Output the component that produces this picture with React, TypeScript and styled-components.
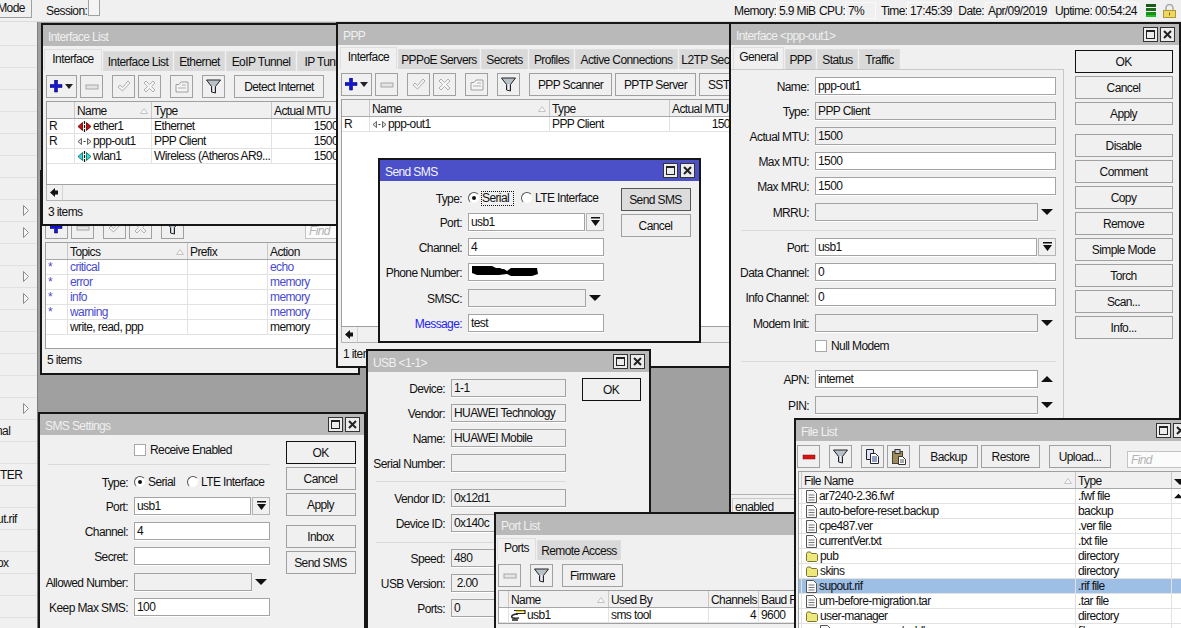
import React from "react"
import styled, { createGlobalStyle } from "styled-components"

const GlobalStyle = createGlobalStyle`
  * { box-sizing: border-box; }
  html, body { margin: 0; padding: 0; background: #a0a0a0; }
  body {
    font-family: "Liberation Sans", Arial, sans-serif;
    font-size: 12px;
    letter-spacing: -0.6px;
    color: #111;
  }
`

/* ---------- page frame ---------- */

const Desktop = styled.div`
  position: relative;
  width: 1181px;
  height: 628px;
  overflow: hidden;
  display: flex;
  flex-direction: column;
`

const TopBar = styled.header`
  flex: none;
  height: 22px;
  display: flex;
  align-items: center;
  padding-right: 4px;
  background: #f0f0f0;
  border-bottom: 1px solid #dcdcdc;
`

const ModeButton = styled.div`
  align-self: flex-start;
  width: 67px;
  height: 18px;
  margin-left: -35px;
  line-height: 16px;
  text-align: center;
  border: 1px solid #a0a0a0;
  border-top: none;
`

const SessionLabel = styled.span`
  margin-left: 14px;
  width: 42px;
`

const SessionBox = styled.div`
  align-self: flex-start;
  width: 12px;
  height: 16px;
  background: #f4f4f4;
  border: 1px solid #a0a0a0;
  border-top: none;
`

const StatusItems = styled.div`
  margin-left: auto;
  display: flex;
  align-items: center;
  gap: 5px;
`

const StatusItem = styled.div`
  display: flex;
  align-items: center;
`

const StatusLabel = styled.span<{ $w: number }>`
  width: ${(p) => p.$w}px;
  text-align: right;
  white-space: nowrap;
`

const StatusValue = styled.span<{ $w: number }>`
  width: ${(p) => p.$w}px;
  height: 17px;
  line-height: 16px;
  padding-left: 2px;
  margin-left: 1px;
  border: 1px solid #fafafa;
  white-space: nowrap;
`

const TrayIcons = styled.div`
  display: flex;
  align-items: center;
  gap: 6px;
  margin-left: 7px;
`

const Main = styled.div`
  flex: 1;
  display: flex;
  min-height: 0;
`

const Sidebar = styled.nav`
  flex: none;
  width: 38px;
  padding-top: 2px;
  background: #f0f0f0;
  border-right: 1px solid #808080;
  overflow: hidden;
`

const SidebarRow = styled.div`
  height: 22px;
  display: flex;
  align-items: center;
  justify-content: space-between;
  padding-right: 8px;
  border-bottom: 1px solid #e0e0e0;
`

const SidebarText = styled.span<{ $clip: number }>`
  margin-left: -${(p) => p.$clip}px;
  white-space: nowrap;
`

const Workspace = styled.main`
  flex: 1;
  background: #a0a0a0;
`

/* ---------- window chrome ---------- */

const WindowFrame = styled.section<{ $x: number; $y: number; $w: number; $h: number }>`
  position: absolute;
  left: ${(p) => p.$x}px;
  top: ${(p) => p.$y}px;
  width: ${(p) => p.$w}px;
  height: ${(p) => p.$h}px;
  display: flex;
  flex-direction: column;
  overflow: hidden;
  background: #f0f0f0;
  border: 2px solid #161616;
`

const TitleBar = styled.div<{ $active?: boolean }>`
  flex: none;
  height: 21px;
  display: flex;
  align-items: center;
  justify-content: space-between;
  padding: 0 4px 0 5px;
  background: ${(p) => (p.$active ? "#4c50c8" : "#b9b9b9")};
  color: ${(p) => (p.$active ? "#f4f4ff" : "#f0f0f0")};
`

const TitleText = styled.span`
  padding-top: 2px;
`

const TitleButtons = styled.div`
  display: flex;
  gap: 2px;
`

const TitleButton = styled.div`
  width: 15px;
  height: 15px;
  display: flex;
  align-items: center;
  justify-content: center;
  background: #ececec;
  border: 1px solid #333;
`

const MaxGlyph = styled.span`
  display: block;
  width: 9px;
  height: 9px;
  border: 1px solid #222;
  border-top-width: 2px;
`

const BodyRow = styled.div`
  flex: 1;
  display: flex;
  min-height: 0;
`

const TabBar = styled.div<{ $mt: number; $ml: number }>`
  flex: none;
  height: 22px;
  display: flex;
  align-items: flex-end;
  gap: 1px;
  margin: ${(p) => p.$mt}px 0 0 ${(p) => p.$ml}px;
`

const Tab = styled.div<{ $w: number; $active?: boolean }>`
  flex: none;
  width: ${(p) => p.$w}px;
  height: ${(p) => (p.$active ? 22 : 20)}px;
  line-height: ${(p) => (p.$active ? 19 : 20)}px;
  text-align: center;
  white-space: nowrap;
  background: ${(p) => (p.$active ? "#f0f0f0" : "#d9d9d9")};
  border: 1px solid #dedede;
  border-bottom: none;
`

const Toolbar = styled.div<{ $inset: number; $mt?: number }>`
  flex: none;
  height: 23px;
  display: flex;
  gap: 9px;
  margin: ${(p) => p.$mt ?? 4}px ${(p) => p.$inset}px 3px;
`

const ToolGroup = styled.div`
  display: flex;
  gap: 3px;
`

const ToolButton = styled.div<{ $w: number }>`
  flex: none;
  width: ${(p) => p.$w}px;
  height: 23px;
  display: flex;
  align-items: center;
  justify-content: center;
  gap: 2px;
  white-space: nowrap;
  border: 1px solid #a0a0a0;
`

const FindBox = styled.div<{ $ml: number }>`
  flex: none;
  align-self: flex-end;
  width: 70px;
  height: 17px;
  margin-left: ${(p) => p.$ml}px;
  padding-left: 3px;
  line-height: 16px;
  font-style: italic;
  color: #b4b4b4;
  background: #fbfbfb;
  border: 1px solid #c4c4c4;
`

/* ---------- list table ---------- */

const Table = styled.div<{ $inset: number; $h?: number }>`
  flex: none;
  height: ${(p) => (p.$h ? `${p.$h}px` : "auto")};
  margin: 0 ${(p) => p.$inset}px;
  overflow: hidden;
  background: #fff;
  border: 1px solid #a0a0a0;
`

const HeadRow = styled.div`
  display: flex;
  height: 17px;
  background: #f0f0f0;
  border-bottom: 1px solid #a8a8a8;
`

const HeadCell = styled.div<{ $w: number }>`
  flex: none;
  width: ${(p) => p.$w}px;
  display: flex;
  align-items: center;
  justify-content: space-between;
  padding: ${(p) => (p.$w < 8 ? "0" : "1px 3px 0 2px")};
  overflow: hidden;
  white-space: nowrap;
  border-right: 1px solid #c8c8c8;
`

const DataRow = styled.div<{ $selected?: boolean; $color?: string }>`
  display: flex;
  height: 15px;
  line-height: 14px;
  color: ${(p) => p.$color || "#111"};
  background: ${(p) => (p.$selected ? "#9dbfe6" : "#fff")};
  border-bottom: 1px solid #e2e2e2;
`

const DataCell = styled.div<{ $w: number; $right?: boolean }>`
  flex: none;
  width: ${(p) => p.$w}px;
  display: flex;
  align-items: center;
  justify-content: ${(p) => (p.$right ? "flex-end" : "flex-start")};
  gap: 1px;
  padding: ${(p) => (p.$w < 8 ? "0" : "0 2px")};
  overflow: hidden;
  white-space: nowrap;
  border-right: 1px solid #e2e2e2;
`

const FileName = styled.span<{ $indent?: number }>`
  display: inline-flex;
  align-items: center;
  gap: 2px;
  padding-left: ${(p) => p.$indent ?? 2}px;
`

const ScrollRow = styled.div`
  flex: none;
  height: 16px;
  display: flex;
  margin: 0 3px;
  background: #f0f0f0;
  border: 1px solid #b4b4b4;
  border-top: none;
`

const ScrollArrow = styled.div`
  width: 16px;
  display: flex;
  align-items: center;
  justify-content: center;
  border-right: 1px solid #d4d4d4;
`

const StatusLine = styled.div`
  flex: 1;
  line-height: 23px;
  padding-left: 5px;
`

const FooterBar = styled.div`
  flex: none;
  height: 24px;
  padding: 3px 1px 0;
  border-top: 1px solid #b4b4b4;
`

const FooterCell = styled.div`
  width: 68px;
  height: 18px;
  line-height: 17px;
  padding-left: 2px;
  border: 1px solid #c8c8c8;
`

/* ---------- forms ---------- */

const Form = styled.div<{ $label: number; $pt: number }>`
  --label-width: ${(p) => p.$label}px;
  flex: none;
  display: flex;
  flex-direction: column;
  padding-top: ${(p) => p.$pt}px;
`

const Row = styled.div<{ $mt?: number }>`
  flex: none;
  height: 18px;
  display: flex;
  align-items: center;
  margin-top: ${(p) => p.$mt ?? 7}px;
`

const Label = styled.label<{ $accent?: boolean }>`
  flex: none;
  width: var(--label-width);
  margin-right: 6px;
  padding-top: 2px;
  text-align: right;
  white-space: nowrap;
  color: ${(p) => (p.$accent ? "#2323f0" : "#111")};
`

const Field = styled.div<{ $w: number; $off?: boolean }>`
  flex: none;
  width: ${(p) => p.$w}px;
  height: 18px;
  line-height: 17px;
  padding-left: 2px;
  overflow: hidden;
  white-space: nowrap;
  background: ${(p) => (p.$off ? "#f0f0f0" : "#fff")};
  border: 1px solid #a4a4a4;
  box-shadow: 0 1px 0 #fff;
`

const ComboButton = styled.div`
  flex: none;
  width: 18px;
  height: 18px;
  margin-left: 1px;
  display: flex;
  align-items: center;
  justify-content: center;
  border: 1px solid #b4b4b4;
`

const ComboArrow = styled.div`
  flex: none;
  width: 18px;
  display: flex;
  justify-content: center;
`

const Separator = styled.hr<{ $ml: number; $w: number; $mt: number }>`
  flex: none;
  width: ${(p) => p.$w}px;
  height: 1px;
  margin: ${(p) => p.$mt}px 0 0 ${(p) => p.$ml}px;
  border: none;
  background: #dadada;
`

const CheckBox = styled.span`
  flex: none;
  width: 12px;
  height: 12px;
  margin-right: 4px;
  background: #fff;
  border: 1px solid #a8a8a8;
`

const CheckRow = styled(Row)`
  padding-left: calc(var(--label-width) + 6px);
`

const Radio = styled.span<{ $on?: boolean }>`
  flex: none;
  width: 12px;
  height: 12px;
  display: flex;
  align-items: center;
  justify-content: center;
  background: #fff;
  border-radius: 50%;
  border: 1px solid;
  border-color: #555 #eee #eee #555;
  &::after {
    content: "";
    width: 4px;
    height: 4px;
    border-radius: 50%;
    background: ${(p) => (p.$on ? "#111" : "transparent")};
  }
`

const RadioText = styled.span<{ $w: number; $mr?: number; $focus?: boolean }>`
  flex: none;
  width: ${(p) => p.$w}px;
  height: 15px;
  line-height: 13px;
  margin: 0 ${(p) => p.$mr ?? 0}px 0 1px;
  white-space: nowrap;
  border: 1px dotted ${(p) => (p.$focus ? "#111" : "transparent")};
`

const ButtonColumn = styled.div<{ $ml: number; $w: number; $pt: number }>`
  flex: none;
  width: ${(p) => p.$w}px;
  display: flex;
  flex-direction: column;
  gap: 9px;
  margin-left: ${(p) => p.$ml}px;
  padding-top: ${(p) => p.$pt}px;
`

const ButtonGroup = styled.div`
  display: flex;
  flex-direction: column;
  gap: 3px;
`

const Button = styled.div<{ $primary?: boolean; $pressed?: boolean }>`
  height: 23px;
  line-height: 22px;
  padding-right: 1px;
  text-align: center;
  white-space: nowrap;
  background: ${(p) => (p.$pressed ? "#dcdcdc" : "#f0f0f0")};
  border: 1px solid ${(p) => (p.$primary ? "#111" : p.$pressed ? "#555" : "#a0a0a0")};
`

const LeftColumn = styled.div`
  flex: none;
  width: 333px;
  display: flex;
  flex-direction: column;
`

const TabPane = styled.div`
  flex: 1;
  border-top: 1px solid #c8c8c8;
  border-right: 1px solid #c8c8c8;
`

/* ---------- drawings ---------- */

const CloseIcon = () => (
  <svg width="9" height="9" viewBox="0 0 9 9">
    <path d="M1 1l7 7M8 1L1 8" stroke="#222" strokeWidth="2" />
  </svg>
)

const PlusIcon = () => (
  <svg width="13" height="13" viewBox="0 0 13 13">
    <path d="M4.500 0h3v4.500H12v3H7.500V12h-3V7.500H0v-3h4.500z" fill="#1414d8" stroke="#0a0a60" strokeWidth="0.6" />
  </svg>
)

const MenuCaret = () => (
  <svg width="8" height="5" viewBox="0 0 8 5">
    <path d="M0 0h8L4 5z" fill="#222" />
  </svg>
)

const MinusIcon = ({ red }: { red?: boolean }) => (
  <svg width="14" height="6" viewBox="0 0 14 6">
    <rect x="1" y="1" width="12" height="4" fill={red ? "#e01010" : "#e4e4e4"} stroke={red ? "#701010" : "#a8a8a8"} strokeWidth={red ? 0.5 : 1} />
  </svg>
)

const CheckIcon = () => (
  <svg width="14" height="13" viewBox="0 0 14 13">
    <path d="M1 7l2-2 2.500 2.500L11 1l2 2-7.500 8z" fill="#f4f4f4" stroke="#b0b0b0" />
  </svg>
)

const CrossIcon = () => (
  <svg width="13" height="13" viewBox="0 0 13 13">
    <path d="M1 3l2-2 3.500 3.500L10 1l2 2-3.500 3.500L12 10l-2 2-3.500-3.500L3 12l-2-2 3.500-3.500z" fill="#f4f4f4" stroke="#b0b0b0" />
  </svg>
)

const NoteIcon = () => (
  <svg width="14" height="12" viewBox="0 0 14 12">
    <path d="M1 3.500h3L6 1h7v10H1z" fill="#f4f4f4" stroke="#a0a0a0" />
    <path d="M7 4h4M3 7h8" stroke="#b0b0b0" />
  </svg>
)

const FilterIcon = () => (
  <svg width="15" height="15" viewBox="0 0 15 15">
    <path d="M.5 1h14L9.500 7.500V14l-4-1V7.500z" fill="#b8c0c8" stroke="#222" />
    <path d="M7.500 7v6" stroke="#eef" strokeWidth="1.500" />
  </svg>
)

const CopyIcon = () => (
  <svg width="13" height="15" viewBox="0 0 13 15">
    <path d="M.5.500h7v10h-7z" fill="#dfe4f4" stroke="#223" />
    <path d="M4.500 4.500h5l3 3v7h-8z" fill="#fff" stroke="#223" />
    <path d="M6 8h5M6 10h5M6 12h5" stroke="#2a3c90" />
  </svg>
)

const PasteIcon = () => (
  <svg width="14" height="16" viewBox="0 0 14 16">
    <rect x="0.5" y="2.500" width="10" height="12" fill="#a08a58" stroke="#443" />
    <rect x="3" y="0.500" width="5" height="4" fill="#c8c8c8" stroke="#333" />
    <path d="M6.500 7.500h4l3 3v5h-7z" fill="#fff" stroke="#333" />
    <path d="M8 11h4M8 13h4" stroke="#555" />
  </svg>
)

const ArrowDown = () => (
  <svg width="12" height="6" viewBox="0 0 12 6">
    <path d="M0 0h12L6 6z" fill="#111" />
  </svg>
)

const ArrowUp = () => (
  <svg width="12" height="6" viewBox="0 0 12 6">
    <path d="M0 6h12L6 0z" fill="#111" />
  </svg>
)

const ComboGlyph = () => (
  <svg width="9" height="10" viewBox="0 0 9 10">
    <path d="M0 0h9v1.500H0zM0 3h9L4.500 9z" fill="#111" />
  </svg>
)

const SortGlyph = () => (
  <svg width="8" height="6" viewBox="0 0 8 6">
    <path d="M4 .5L7.500 5.500H.5z" fill="#f8f8f8" stroke="#c4c4c4" />
  </svg>
)

const ScrollLeftGlyph = () => (
  <svg width="9" height="9" viewBox="0 0 9 9">
    <path d="M0 4.500L5 0v2.500h3v4H5V9z" fill="#111" />
  </svg>
)

const LinkIcon = ({ fill, stroke }: { fill: string; stroke: string }) => (
  <svg width="15" height="11" viewBox="0 0 15 11">
    <path d="M5.500 1.500L1 5.500l4.500 4zM9.500 1.500l4.500 4-4.500 4z" fill={fill} stroke={stroke} strokeWidth="0.8" />
    <path d="M7.500 0v3M7.500 4v3M7.500 8v3" stroke="#111" strokeWidth="1.200" />
  </svg>
)

const PppIcon = () => (
  <svg width="15" height="9" viewBox="0 0 15 9">
    <path d="M4.500 1.500L1 4.500l3.500 3zM10.500 1.500l3.500 3-3.500 3z" fill="#ddd" stroke="#444" strokeWidth="0.8" />
    <path d="M6.500 4.500h2" stroke="#333" />
  </svg>
)

const UsbIcon = () => (
  <svg width="15" height="12" viewBox="0 0 15 12">
    <path d="M3 1.500h11v3H5" fill="none" stroke="#222" strokeWidth="1.200" />
    <path d="M5 2.500h8" stroke="#f0d020" strokeWidth="1.500" />
    <path d="M7 5C2 5 0 7 1 8.500c1 1.500 5 .5 7 .5M1 11h6" fill="none" stroke="#222" strokeWidth="1.400" />
  </svg>
)

const DocIcon = () => (
  <svg width="11" height="13" viewBox="0 0 11 13">
    <path d="M.5.500h7l3 3v9H.5z" fill="#fafafa" stroke="#555" />
    <path d="M2.500 5h6M2.500 7.500h6M2.500 10h6" stroke="#777" />
  </svg>
)

const FolderIcon = () => (
  <svg width="12" height="11" viewBox="0 0 12 11">
    <path d="M.5 2.500L1.500 1h3l1 1.500h5l1 1v6l-1 1h-9l-1-1z" fill="#ece87c" stroke="#7a7430" />
  </svg>
)

const SidebarCaret = () => (
  <svg width="6" height="11" viewBox="0 0 6 11">
    <path d="M.5.500l5 5-5 5z" fill="#f6f6f6" stroke="#8c8c8c" />
  </svg>
)

const Redaction = () => (
  <svg width="68" height="12" viewBox="0 0 68 12">
    <path d="M1 2h20l4 2h4l2 1h2l3 2 4-3h26l1 6-6 2H40l-4-2-8 1H6l-5-2z" fill="#000" />
  </svg>
)

const SignalIcon = () => (
  <svg width="10" height="13" viewBox="0 0 10 13">
    <path d="M0 0h10v3H0z" fill="#1a5a1a" />
    <path d="M0 4h10v3H0z" fill="#206a20" />
    <path d="M0 8h10v3H0z" fill="#1a8c1a" />
    <path d="M0 11h10v2H0z" fill="#20c020" />
  </svg>
)

const LockIcon = () => (
  <svg width="15" height="14" viewBox="0 0 15 14">
    <path d="M4 7V4a3.500 3.500 0 0 1 7 0v3" fill="none" stroke="#a8a8a8" strokeWidth="1.500" />
    <rect x="1.500" y="6.500" width="12" height="7" fill="#f0d860" stroke="#b09830" />
    <path d="M7.500 8.500v3" stroke="#806810" />
  </svg>
)

/* ---------- composed parts ---------- */

interface WindowProps {
  title: string
  x: number
  y: number
  w: number
  h: number
  active?: boolean
  children?: React.ReactNode
}

const AppWindow = ({ title, x, y, w, h, active, children }: WindowProps) => (
  <WindowFrame $x={x} $y={y} $w={w} $h={h}>
    <TitleBar $active={active}>
      <TitleText>{title}</TitleText>
      <TitleButtons>
        <TitleButton>
          <MaxGlyph />
        </TitleButton>
        <TitleButton>
          <CloseIcon />
        </TitleButton>
      </TitleButtons>
    </TitleBar>
    {children}
  </WindowFrame>
)

interface Column {
  title?: React.ReactNode
  width: number
  sorted?: boolean
  right?: boolean
}

interface ListRow {
  cells: React.ReactNode[]
  selected?: boolean
  color?: string
}

const ListTable = ({ columns, rows, inset, h }: { columns: Column[]; rows: ListRow[]; inset: number; h?: number }) => (
  <Table $inset={inset} $h={h}>
    <HeadRow>
      {columns.map((col, i) => (
        <HeadCell key={i} $w={col.width}>
          <span>{col.title}</span>
          {col.sorted ? <SortGlyph /> : null}
        </HeadCell>
      ))}
    </HeadRow>
    {rows.map((row, r) => (
      <DataRow key={r} $selected={row.selected} $color={row.color}>
        {row.cells.map((cell, c) => (
          <DataCell key={c} $w={columns[c].width} $right={columns[c].right}>
            {cell}
          </DataCell>
        ))}
      </DataRow>
    ))}
  </Table>
)

const ScrollBar = () => (
  <ScrollRow>
    <ScrollArrow>
      <ScrollLeftGlyph />
    </ScrollArrow>
  </ScrollRow>
)

const InterfaceTools = () => (
  <>
    <ToolGroup>
      <ToolButton $w={31}>
        <PlusIcon />
        <MenuCaret />
      </ToolButton>
      <ToolButton $w={23}>
        <MinusIcon />
      </ToolButton>
    </ToolGroup>
    <ToolGroup>
      <ToolButton $w={23}>
        <CheckIcon />
      </ToolButton>
      <ToolButton $w={23}>
        <CrossIcon />
      </ToolButton>
    </ToolGroup>
    <ToolButton $w={23}>
      <NoteIcon />
    </ToolButton>
    <ToolButton $w={23}>
      <FilterIcon />
    </ToolButton>
  </>
)

const statusItems = [
  { label: "Memory:", lw: 41, value: "5.9 MiB", vw: 38 },
  { label: "CPU:", lw: 25, value: "7%", vw: 31 },
  { label: "Time:", lw: 25, value: "17:45:39", vw: 46 },
  { label: "Date:", lw: 26, value: "Apr/09/2019", vw: 65 },
  { label: "Uptime:", lw: 36, value: "00:54:24", vw: 47 },
]

const sidebarRows: Record<number, { text: string; clip: number }> = {
  18: { text: "nal", clip: 4 },
  20: { text: "TER", clip: 0 },
  22: { text: "out.rif", clip: 9 },
  24: { text: "ox", clip: 3 },
}
const caretRows = [8, 9, 11, 12, 17]

const fileRows: { name: string; type: string; folder?: boolean; selected?: boolean }[] = [
  { name: "ar7240-2.36.fwf", type: ".fwf file" },
  { name: "auto-before-reset.backup", type: "backup" },
  { name: "cpe487.ver", type: ".ver file" },
  { name: "currentVer.txt", type: ".txt file" },
  { name: "pub", type: "directory", folder: true },
  { name: "skins", type: "directory", folder: true },
  { name: "supout.rif", type: ".rif file", selected: true },
  { name: "um-before-migration.tar", type: ".tar file" },
  { name: "user-manager", type: "directory", folder: true },
]

const LogWindow = () => (
  <AppWindow title="Log" x={40} y={170} w={320} h={205}>
    <Toolbar $inset={3} $mt={23}>
      <ToolGroup>
        <ToolButton $w={23}>
          <PlusIcon />
        </ToolButton>
        <ToolButton $w={23}>
          <MinusIcon />
        </ToolButton>
      </ToolGroup>
      <ToolGroup>
        <ToolButton $w={23}>
          <CheckIcon />
        </ToolButton>
        <ToolButton $w={23}>
          <CrossIcon />
        </ToolButton>
      </ToolGroup>
      <ToolButton $w={23}>
        <FilterIcon />
      </ToolButton>
      <FindBox $ml={112}>Find</FindBox>
    </Toolbar>
    <ListTable
      inset={3}
      h={107}
      columns={[
        { width: 22 },
        { title: "Topics", width: 120, sorted: true },
        { title: "Prefix", width: 80 },
        { title: "Action", width: 80 },
      ]}
      rows={[
        { cells: ["*", "critical", "", "echo"], color: "#4a4ad0" },
        { cells: ["*", "error", "", "memory"], color: "#4a4ad0" },
        { cells: ["*", "info", "", "memory"], color: "#4a4ad0" },
        { cells: ["*", "warning", "", "memory"], color: "#4a4ad0" },
        { cells: ["", "write, read, ppp", "", "memory"] },
      ]}
    />
    <StatusLine>5 items</StatusLine>
  </AppWindow>
)

const InterfaceListWindow = () => (
  <AppWindow title="Interface List" x={41} y={23} w={400} h={203}>
    <TabBar $mt={3} $ml={1}>
      <Tab $w={58} $active>
        Interface
      </Tab>
      <Tab $w={70}>Interface List</Tab>
      <Tab $w={51}>Ethernet</Tab>
      <Tab $w={70}>EoIP Tunnel</Tab>
      <Tab $w={60}>IP Tunnel</Tab>
    </TabBar>
    <Toolbar $inset={3}>
      <InterfaceTools />
      <ToolButton $w={90}>Detect Internet</ToolButton>
    </Toolbar>
    <ListTable
      inset={3}
      h={84}
      columns={[
        { width: 28 },
        { title: "Name", width: 77, sorted: true },
        { title: "Type", width: 120 },
        { title: "Actual MTU", width: 69, right: true },
      ]}
      rows={[
        {
          cells: [
            "R",
            <>
              <LinkIcon fill="#c81010" stroke="#500" />
              ether1
            </>,
            "Ethernet",
            "1500",
          ],
        },
        {
          cells: [
            "R",
            <>
              <PppIcon />
              ppp-out1
            </>,
            "PPP Client",
            "1500",
          ],
        },
        {
          cells: [
            "",
            <>
              <LinkIcon fill="#30d8e8" stroke="#064" />
              wlan1
            </>,
            "Wireless (Atheros AR9...",
            "1500",
          ],
        },
      ]}
    />
    <ScrollBar />
    <StatusLine>3 items</StatusLine>
  </AppWindow>
)

const SmsSettingsWindow = () => (
  <AppWindow title="SMS Settings" x={38} y={412} w={328} h={230}>
    <BodyRow>
      <Form $label={88} $pt={6}>
        <CheckRow $mt={0}>
          <CheckBox />
          Receive Enabled
        </CheckRow>
        <Separator $ml={8} $w={222} $mt={5} />
        <Row $mt={8}>
          <Label>Type:</Label>
          <Radio $on />
          <RadioText $w={33} $mr={7}>
            Serial
          </RadioText>
          <Radio />
          <RadioText $w={70}>LTE Interface</RadioText>
        </Row>
        <Row $mt={6}>
          <Label>Port:</Label>
          <Field $w={117}>usb1</Field>
          <ComboButton>
            <ComboGlyph />
          </ComboButton>
        </Row>
        <Row>
          <Label>Channel:</Label>
          <Field $w={136}>4</Field>
        </Row>
        <Row>
          <Label>Secret:</Label>
          <Field $w={136} />
        </Row>
        <Row $mt={8}>
          <Label>Allowed Number:</Label>
          <Field $w={118} $off />
          <ComboArrow>
            <ArrowDown />
          </ComboArrow>
        </Row>
        <Row>
          <Label>Keep Max SMS:</Label>
          <Field $w={136}>100</Field>
        </Row>
      </Form>
      <ButtonColumn $ml={16} $w={70} $pt={6}>
        <ButtonGroup>
          <Button $primary>OK</Button>
          <Button>Cancel</Button>
          <Button>Apply</Button>
        </ButtonGroup>
        <ButtonGroup>
          <Button>Inbox</Button>
          <Button>Send SMS</Button>
        </ButtonGroup>
      </ButtonColumn>
    </BodyRow>
  </AppWindow>
)

const PppWindow = () => (
  <AppWindow title="PPP" x={336} y={22} w={450} h={346}>
    <TabBar $mt={2} $ml={2}>
      <Tab $w={57} $active>
        Interface
      </Tab>
      <Tab $w={82}>PPPoE Servers</Tab>
      <Tab $w={47}>Secrets</Tab>
      <Tab $w={45}>Profiles</Tab>
      <Tab $w={103}>Active Connections</Tab>
      <Tab $w={70}>L2TP Secrets</Tab>
    </TabBar>
    <Toolbar $inset={3}>
      <InterfaceTools />
      <ToolGroup>
        <ToolButton $w={83}>PPP Scanner</ToolButton>
        <ToolButton $w={81}>PPTP Server</ToolButton>
        <ToolButton $w={81}>SSTP Server</ToolButton>
      </ToolGroup>
    </Toolbar>
    <ListTable
      inset={3}
      h={228}
      columns={[
        { width: 28 },
        { title: "Name", width: 180, sorted: true },
        { title: "Type", width: 120 },
        { title: "Actual MTU", width: 69, right: true },
      ]}
      rows={[
        {
          cells: [
            "R",
            <>
              <PppIcon />
              ppp-out1
            </>,
            "PPP Client",
            "1500",
          ],
        },
      ]}
    />
    <ScrollBar />
    <StatusLine>1 item</StatusLine>
  </AppWindow>
)

const InterfaceWindow = () => (
  <AppWindow title="Interface <ppp-out1>" x={729} y={22} w={452} h={498}>
    <BodyRow>
      <LeftColumn>
        <TabBar $mt={2} $ml={2}>
          <Tab $w={51} $active>
            General
          </Tab>
          <Tab $w={31}>PPP</Tab>
          <Tab $w={41}>Status</Tab>
          <Tab $w={41}>Traffic</Tab>
        </TabBar>
        <TabPane>
          <Form $label={78} $pt={7}>
            <Row $mt={0}>
              <Label>Name:</Label>
              <Field $w={241}>ppp-out1</Field>
            </Row>
            <Row>
              <Label>Type:</Label>
              <Field $w={241} $off>
                PPP Client
              </Field>
            </Row>
            <Row>
              <Label>Actual MTU:</Label>
              <Field $w={241} $off>
                1500
              </Field>
            </Row>
            <Row>
              <Label>Max MTU:</Label>
              <Field $w={241}>1500</Field>
            </Row>
            <Row>
              <Label>Max MRU:</Label>
              <Field $w={241}>1500</Field>
            </Row>
            <Row $mt={8}>
              <Label>MRRU:</Label>
              <Field $w={223} $off />
              <ComboArrow>
                <ArrowDown />
              </ComboArrow>
            </Row>
            <Separator $ml={10} $w={315} $mt={9} />
            <Row>
              <Label>Port:</Label>
              <Field $w={222}>usb1</Field>
              <ComboButton>
                <ComboGlyph />
              </ComboButton>
            </Row>
            <Row>
              <Label>Data Channel:</Label>
              <Field $w={241}>0</Field>
            </Row>
            <Row>
              <Label>Info Channel:</Label>
              <Field $w={241}>0</Field>
            </Row>
            <Row $mt={8}>
              <Label>Modem Init:</Label>
              <Field $w={223} $off />
              <ComboArrow>
                <ArrowDown />
              </ComboArrow>
            </Row>
            <CheckRow $mt={5}>
              <CheckBox />
              Null Modem
            </CheckRow>
            <Separator $ml={10} $w={315} $mt={6} />
            <Row $mt={8}>
              <Label>APN:</Label>
              <Field $w={223}>internet</Field>
              <ComboArrow>
                <ArrowUp />
              </ComboArrow>
            </Row>
            <Row $mt={8}>
              <Label>PIN:</Label>
              <Field $w={223} $off />
              <ComboArrow>
                <ArrowDown />
              </ComboArrow>
            </Row>
          </Form>
        </TabPane>
      </LeftColumn>
      <ButtonColumn $ml={11} $w={98} $pt={5}>
        <ButtonGroup>
          <Button $primary>OK</Button>
          <Button>Cancel</Button>
          <Button>Apply</Button>
        </ButtonGroup>
        <ButtonGroup>
          <Button>Disable</Button>
          <Button>Comment</Button>
          <Button>Copy</Button>
          <Button>Remove</Button>
          <Button>Simple Mode</Button>
          <Button>Torch</Button>
          <Button>Scan...</Button>
          <Button>Info...</Button>
        </ButtonGroup>
      </ButtonColumn>
    </BodyRow>
    <FooterBar>
      <FooterCell>enabled</FooterCell>
    </FooterBar>
  </AppWindow>
)

const UsbWindow = () => (
  <AppWindow title="USB <1-1>" x={366} y={349} w={285} h={300}>
    <BodyRow>
      <Form $label={77} $pt={7}>
        <Row $mt={0}>
          <Label>Device:</Label>
          <Field $w={115} $off>
            1-1
          </Field>
        </Row>
        <Row>
          <Label>Vendor:</Label>
          <Field $w={115} $off>
            HUAWEI Technology
          </Field>
        </Row>
        <Row>
          <Label>Name:</Label>
          <Field $w={115} $off>
            HUAWEI Mobile
          </Field>
        </Row>
        <Row>
          <Label>Serial Number:</Label>
          <Field $w={115} $off />
        </Row>
        <Separator $ml={8} $w={190} $mt={9} />
        <Row>
          <Label>Vendor ID:</Label>
          <Field $w={115} $off>
            0x12d1
          </Field>
        </Row>
        <Row>
          <Label>Device ID:</Label>
          <Field $w={115} $off>
            0x140c
          </Field>
        </Row>
        <Separator $ml={8} $w={190} $mt={10} />
        <Row $mt={6}>
          <Label>Speed:</Label>
          <Field $w={115} $off>
            480
          </Field>
        </Row>
        <Row>
          <Label>USB Version:</Label>
          <Field $w={115} $off>
            &nbsp;2.00
          </Field>
        </Row>
        <Row>
          <Label>Ports:</Label>
          <Field $w={115} $off>
            0
          </Field>
        </Row>
      </Form>
      <ButtonColumn $ml={16} $w={59} $pt={6}>
        <Button $primary>OK</Button>
      </ButtonColumn>
    </BodyRow>
  </AppWindow>
)

const PortListWindow = () => (
  <AppWindow title="Port List" x={494} y={512} w={340} h={140}>
    <TabBar $mt={3} $ml={1}>
      <Tab $w={39} $active>
        Ports
      </Tab>
      <Tab $w={84}>Remote Access</Tab>
    </TabBar>
    <Toolbar $inset={2}>
      <ToolButton $w={23}>
        <MinusIcon />
      </ToolButton>
      <ToolButton $w={23}>
        <FilterIcon />
      </ToolButton>
      <ToolButton $w={61}>Firmware</ToolButton>
    </Toolbar>
    <ListTable
      inset={2}
      columns={[
        { width: 10 },
        { title: "Name", width: 100, sorted: true },
        { title: "Used By", width: 100 },
        { title: "Channels", width: 50, right: true },
        { title: "Baud Rate", width: 60 },
      ]}
      rows={[
        {
          cells: [
            "",
            <>
              <UsbIcon />
              usb1
            </>,
            "sms tool",
            "4",
            "9600",
          ],
        },
      ]}
    />
  </AppWindow>
)

const FileListWindow = () => (
  <AppWindow title="File List" x={794} y={418} w={400} h={230}>
    <Toolbar $inset={1}>
      <ToolButton $w={23}>
        <MinusIcon red />
      </ToolButton>
      <ToolButton $w={23}>
        <FilterIcon />
      </ToolButton>
      <ToolGroup>
        <ToolButton $w={23}>
          <CopyIcon />
        </ToolButton>
        <ToolButton $w={23}>
          <PasteIcon />
        </ToolButton>
      </ToolGroup>
      <ToolGroup>
        <ToolButton $w={59}>Backup</ToolButton>
        <ToolButton $w={59}>Restore</ToolButton>
      </ToolGroup>
      <ToolButton $w={62}>Upload...</ToolButton>
      <FindBox $ml={7}>Find</FindBox>
    </Toolbar>
    <ListTable
      inset={2}
      columns={[
        { width: 3 },
        { title: "File Name", width: 274, sorted: true },
        { title: "Type", width: 96 },
        { title: <ArrowDown />, width: 14 },
      ]}
      rows={[
        ...fileRows.map((file, i) => ({
          selected: file.selected,
          cells: [
            "",
            <FileName key={file.name}>
              {file.folder ? <FolderIcon /> : <DocIcon />}
              {file.name}
            </FileName>,
            file.type,
            i === 0 ? <ArrowUp /> : "",
          ],
        })),
        {
          cells: [
            "",
            <FileName key="child" $indent={16}>
              <DocIcon />
              user-manager/sqldb
            </FileName>,
            "file",
            "",
          ],
        },
      ]}
    />
  </AppWindow>
)

const SendSmsWindow = () => (
  <AppWindow title="Send SMS" x={378} y={158} w={323} h={185} active>
    <BodyRow>
      <Form $label={82} $pt={8}>
        <Row $mt={0}>
          <Label>Type:</Label>
          <Radio $on />
          <RadioText $w={33} $mr={7} $focus>
            Serial
          </RadioText>
          <Radio />
          <RadioText $w={70}>LTE Interface</RadioText>
        </Row>
        <Row $mt={6}>
          <Label>Port:</Label>
          <Field $w={117}>usb1</Field>
          <ComboButton>
            <ComboGlyph />
          </ComboButton>
        </Row>
        <Row>
          <Label>Channel:</Label>
          <Field $w={136}>4</Field>
        </Row>
        <Row>
          <Label>Phone Number:</Label>
          <Field $w={136}>
            <Redaction />
          </Field>
        </Row>
        <Row $mt={8}>
          <Label>SMSC:</Label>
          <Field $w={118} $off />
          <ComboArrow>
            <ArrowDown />
          </ComboArrow>
        </Row>
        <Row>
          <Label $accent>Message:</Label>
          <Field $w={136}>test</Field>
        </Row>
      </Form>
      <ButtonColumn $ml={17} $w={70} $pt={7}>
        <ButtonGroup>
          <Button $pressed>Send SMS</Button>
          <Button>Cancel</Button>
        </ButtonGroup>
      </ButtonColumn>
    </BodyRow>
  </AppWindow>
)

const App = () => (
  <Desktop>
    <GlobalStyle />
    <TopBar>
      <ModeButton>Safe Mode</ModeButton>
      <SessionLabel>Session:</SessionLabel>
      <SessionBox />
      <StatusItems>
        {statusItems.map((item) => (
          <StatusItem key={item.label}>
            <StatusLabel $w={item.lw}>{item.label}</StatusLabel>
            <StatusValue $w={item.vw}>{item.value}</StatusValue>
          </StatusItem>
        ))}
      </StatusItems>
      <TrayIcons>
        <SignalIcon />
        <LockIcon />
      </TrayIcons>
    </TopBar>
    <Main>
      <Sidebar>
        {Array.from({ length: 28 }, (_, i) => (
          <SidebarRow key={i}>
            {sidebarRows[i] ? <SidebarText $clip={sidebarRows[i].clip}>{sidebarRows[i].text}</SidebarText> : <span />}
            {caretRows.includes(i) ? <SidebarCaret /> : null}
          </SidebarRow>
        ))}
      </Sidebar>
      <Workspace />
    </Main>
    <LogWindow />
    <InterfaceListWindow />
    <SmsSettingsWindow />
    <PppWindow />
    <InterfaceWindow />
    <UsbWindow />
    <PortListWindow />
    <FileListWindow />
    <SendSmsWindow />
  </Desktop>
)

export default App
